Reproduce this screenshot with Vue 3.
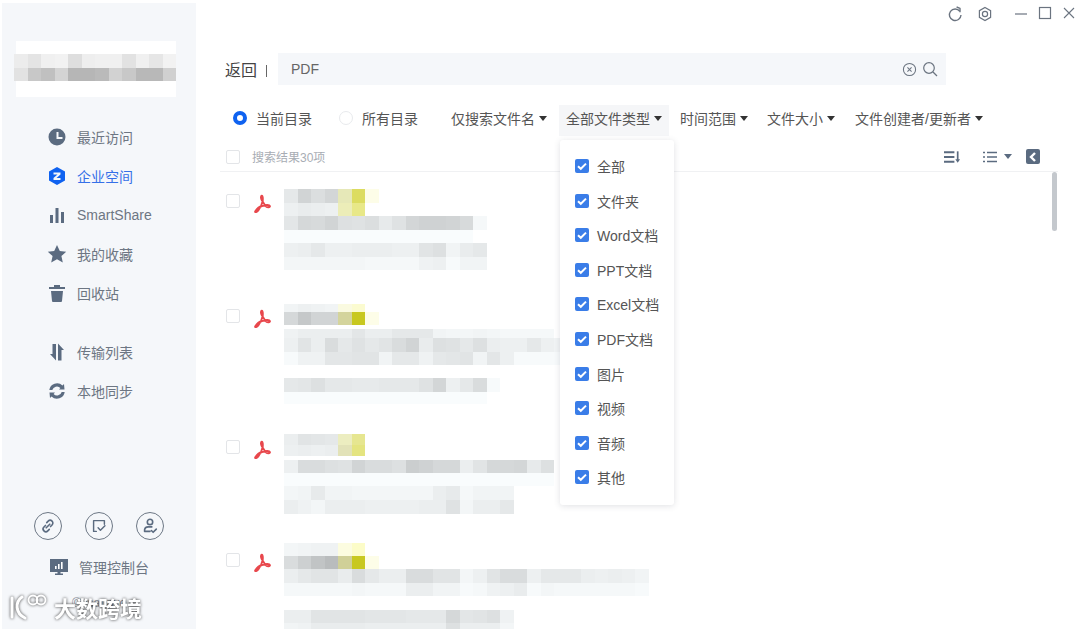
<script setup>
const navTop = [
  { label: '最近访问', d: 'M10 1.5a8.5 8.5 0 1 0 0 17 8.5 8.5 0 0 0 0-17z M9.5 5h2v5h4v2h-6z' },
  { label: '企业空间', active: true, d: 'M10 1L18 5.5V14.5L10 19L2 14.5V5.5z M6.5 6.5h7v2l-4 3.5h4v2h-7v-2l4-3.5h-4z' },
  { label: 'SmartShare', d: 'M3 10h3v8H3z M8.5 3h3v15h-3z M14 7h3v11h-3z' },
  { label: '我的收藏', d: 'M10 1l2.8 6 6.4.7-4.8 4.4 1.4 6.4L10 15.2 4.2 18.5l1.4-6.4L.8 7.7 7.2 7z' },
  { label: '回收站', d: 'M7 2h6v2h5v2H2V4h5z M4 8h12l-1 10a1 1 0 0 1-1 1H6a1 1 0 0 1-1-1z' },
]
const navBottom = [
  { label: '传输列表', d: 'M5.5 2H9v16.5L3 12h2.5z M11 1.5L17 8h-2.5v10.5H11z' },
  { label: '本地同步', d: 'M2.3 9A7.8 7.8 0 0 1 15.5 4.5L17 3L17.5 8.5L12 8.5L13.4 7A4.8 4.8 0 0 0 5.3 9z M17.7 11A7.8 7.8 0 0 1 4.5 15.5L3 17L2.5 11.5L8 11.5L6.6 13A4.8 4.8 0 0 0 14.7 11z' },
]

const fileTypes = ['全部', '文件夹', 'Word文档', 'PPT文档', 'Excel文档', 'PDF文档', '图片', '视频', '音频', '其他']

// two hex digits = grey level with a cool tint, six = a full colour
const cellColor = t => {
  if (t.length === 6) return `#${t}`
  const v = parseInt(t, 16)
  return `rgb(${v - 3}, ${v}, ${Math.min(v + 1, 255)})`
}
const row = (h, cells = '') => ({ h, cells: cells.split(' ').filter(Boolean).map(cellColor) })

const logoRows = [
  row(13.5, 'ececec e4e4e4 f0f0f0 f2f2f2 dedede eeeeee f0f0f0 f0f0f0 e2e2e2 f0f0f0 e6e6e6 f2f2f2'),
  row(13.5, 'e2e2e2 c8c8c8 c0c0c0 d4d4d4 b6b6b6 b6b6b6 bababa d2d2d2 c8c8c8 b8b8b8 b8b8b8 d0d0d0'),
]

const results = [
  {
    gap: 17, pad: 5,
    rows: [
      row(13.5, 'e8 d4 de d6 e6e8b8 dcdc60 fdfde8'),
      row(13.5, 'f0 ec ee f0 ecedb8 e8e888'),
      row(13.5, 'e6 d8 da d4 e0 e2 de ea e2 d6 d2 d2 d4 da f8'),
      row(13.5, 'fc fc fc fc fc fc fc fc fc fc fc fc fc fc'),
      row(13.5, 'f0 ee e8 f0 f0 ee ee ee f0 f0 e4 e0 f4 ec e8'),
      row(13.5, 'f6 f6 f6 f6 f6 f6 f8 f8 f8 f8 f2 f0 fa f4 f4'),
    ],
  },
  {
    gap: 34, pad: 5,
    rows: [
      row(7.5, 'f4 f0 f2 f4 fafae0 fbfbd0'),
      row(13.5, 'd8 c8 d4 d4 d4d49c c8c820 fdfde8'),
      row(4),
      row(9, 'f2 ee ee ee ee e6 ee ee e8 e8 e8 f4 f6 f6 f4 f6 f8 f8 f8 f8'),
      row(13.5, 'f0 e4 ee dc e8 e2 e8 e4 dc d4 ec e0 e2 e8 e0 ee f0 f0 e8 f0 f4'),
      row(13.5, 'fa f2 f2 e6 e6 e4 e4 f4 e8 e8 f2 e8 e6 e4 f4 e6 f0 fa fa fa fa'),
      row(13),
      row(13.5, 'e8 e6 e0 e8 e8 ea ea e8 e8 e8 e2 d6 f0 e8 dc fa'),
      row(12, 'fc fc fc fc fc fc fc fc fc fc fc fc fc fc fc'),
    ],
  },
  {
    gap: 30, pad: 6,
    rows: [
      row(11, 'ee e4 e6 e8 ecedc0 e6e690'),
      row(11, 'f0 ee f0 ee e2e2b8 e4e480'),
      row(4),
      row(13.5, 'f0 dc dc e0 e2 d4 dc dc e0 ce d2 d8 d8 ee e4 d8 d8 d6 ea e0'),
      row(13, 'fc fc fc fc fc fc fc fc fc fc fc fc fc fc fc fc fc fc fc fc'),
      row(13.5, 'f6 f4 ea f4 f4 f6 f6 f6 f6 f6 f6 ee ea f8 f4 f4 f4'),
      row(14, 'ee f2 f6 ee ee ee f0 f0 f0 f0 ee ee e2 f6 ee ee e8'),
    ],
  },
  {
    gap: 29, pad: 10,
    rows: [
      row(13, 'f6 f4 f2 f2 fcfce0 fcfcc8'),
      row(13.5, 'dc d0 c4 bc d0d098 c8c820 fdfde8'),
      row(13.5, 'ee e8 e4 e4 ec dc e8 ee ee dc dc e4 e4 f6 f0 e4 dc dc f0 e8 e8 e8 ee f0 ee f0 f4'),
      row(13.5, 'f8 f8 f8 f8 f8 f6 f8 f8 f8 ee ee f4 f4 fa f8 f2 f0 ec fa f6 f8 f8 f8 f8 f8 f8 fa'),
      row(13.5),
      row(13.5, 'ee ee e4 e4 e4 e4 e6 e6 e6 e8 e8 e8 d8 e6 e4 e0 f2'),
      row(13.5, 'f4 f2 ec ec ec ec ee ee ee ee ee ee e0 ee ee ee f6'),
    ],
  },
]
</script>

<template>
  <div class="app">
    <aside class="sidebar">
      <div class="logo">
        <div v-for="(r, i) in logoRows" :key="i" class="cells" :style="{ height: r.h + 'px' }">
          <i v-for="(c, j) in r.cells" :key="j" :style="{ background: c }"></i>
        </div>
      </div>

      <nav class="nav">
        <a v-for="item in navTop" :key="item.label" class="nav-item" :class="{ active: item.active }">
          <svg viewBox="0 0 20 20" width="20" height="20"><path :d="item.d" fill="currentColor" fill-rule="evenodd" /></svg>
          <span>{{ item.label }}</span>
        </a>
      </nav>
      <nav class="nav">
        <a v-for="item in navBottom" :key="item.label" class="nav-item">
          <svg viewBox="0 0 20 20" width="20" height="20"><path :d="item.d" fill="currentColor" fill-rule="evenodd" /></svg>
          <span>{{ item.label }}</span>
        </a>
      </nav>

      <div class="side-bottom">
        <div class="round-btns">
          <span class="round">
            <svg viewBox="0 0 20 20" width="18" height="18" fill="none" stroke="#5b6b80" stroke-width="1.8" stroke-linecap="round">
              <path d="M8.6 6.2l1.6-1.6a3 3 0 0 1 4.3 4.3l-1.7 1.7" />
              <path d="M11.4 13.8l-1.6 1.6a3 3 0 0 1-4.3-4.3l1.7-1.7" />
              <path d="M8 12l4-4" />
            </svg>
          </span>
          <span class="round">
            <svg viewBox="0 0 20 20" width="18" height="18" fill="none" stroke="#5b6b80" stroke-width="1.6" stroke-linecap="round" stroke-linejoin="round">
              <path d="M7 16H4V4h12v4" />
              <path d="M9 12l2.6 2.6 5-5" />
            </svg>
          </span>
          <span class="round">
            <svg viewBox="0 0 20 20" width="18" height="18" fill="none" stroke="#5b6b80" stroke-width="1.8" stroke-linecap="round" stroke-linejoin="round">
              <circle cx="10" cy="5.5" r="3" />
              <path d="M10 16H4v-2a4 4 0 0 1 4-3h4" />
              <path d="M11.5 15l2 2 3.5-3.5" />
            </svg>
          </span>
        </div>
        <div class="manage">
          <svg viewBox="0 0 18 18" width="18" height="18">
            <path d="M0 1h18v13h-7.5v1.5H13V17H5v-1.5h2.5V14H0z" fill="#5b6b80" />
            <path d="M5 8h1.6v3H5z M8 6h1.6v5H8z M11 4h1.6v7H11z" fill="#fff" />
          </svg>
          <span>管理控制台</span>
        </div>
        <div class="copyright">©esanpvo</div>
      </div>
    </aside>

    <main class="main">
      <header class="titlebar">
        <svg viewBox="0 0 16 16" width="16" height="16" fill="none" stroke="#6b7480" stroke-width="1.4" class="t-refresh">
          <path d="M12.8 5.2A5.8 5.8 0 1 0 14 9" />
          <path d="M9.6 1l3.4 1.4v3.8" stroke-linejoin="round" />
        </svg>
        <svg viewBox="0 0 16 16" width="16" height="16" fill="none" stroke="#6b7480" stroke-width="1.2" class="t-gear">
          <path d="M8 1.5l5.6 3.2v6.6L8 14.5l-5.6-3.2V4.7z" />
          <circle cx="8" cy="8" r="2.6" />
        </svg>
        <svg viewBox="0 0 14 14" width="14" height="14" fill="none" stroke="#6b7480" stroke-width="1.2" class="t-min"><path d="M1 7h12" /></svg>
        <svg viewBox="0 0 14 14" width="14" height="14" fill="none" stroke="#6b7480" stroke-width="1.2" class="t-max"><rect x="1.5" y="1.5" width="11" height="11" /></svg>
        <svg viewBox="0 0 14 14" width="14" height="14" fill="none" stroke="#6b7480" stroke-width="1.1" class="t-close"><path d="M2 2l10 10M12 2L2 12" /></svg>
      </header>

      <div class="search-row">
        <span class="back">返回</span>
        <span class="sep"></span>
        <div class="search-input">
          <span class="query">PDF</span>
          <svg viewBox="0 0 16 16" width="15" height="15" fill="none" stroke="#6b7480" stroke-width="1.1">
            <circle cx="8" cy="8" r="6.5" />
            <path d="M5.8 5.8l4.4 4.4M10.2 5.8l-4.4 4.4" />
          </svg>
          <svg viewBox="0 0 16 16" width="16" height="16" fill="none" stroke="#6b7480" stroke-width="1.2">
            <circle cx="7" cy="7" r="5.3" />
            <path d="M11 11l4 4" />
          </svg>
        </div>
      </div>

      <div class="filters">
        <label class="radio on"><i></i>当前目录</label>
        <label class="radio second"><i></i>所有目录</label>
        <div class="filter">仅搜索文件名<b class="caret"></b></div>
        <div class="filter open">
          全部文件类型<b class="caret"></b>
          <div class="dropdown">
            <div v-for="t in fileTypes" :key="t" class="opt">
              <span class="tick">
                <svg viewBox="0 0 14 14" width="14" height="14" fill="none" stroke="#fff" stroke-width="2"><path d="M3 7.2l2.8 2.6L11 4.6" /></svg>
              </span>
              {{ t }}
            </div>
          </div>
        </div>
        <div class="filter">时间范围<b class="caret"></b></div>
        <div class="filter">文件大小<b class="caret"></b></div>
        <div class="filter last">文件创建者/更新者<b class="caret"></b></div>
      </div>

      <div class="list-head">
        <span class="check"></span>
        <span class="count">搜索结果30项</span>
        <div class="head-tools">
          <svg viewBox="0 0 18 14" width="17" height="14" fill="none" stroke="#5b6b80" stroke-width="2.2">
            <path d="M0 2h11M0 7h11M0 12h11" />
            <path d="M14.5 1v10" stroke-width="1.8" />
            <path d="M12 9.5h5L14.5 13z" fill="#5b6b80" stroke="none" />
          </svg>
          <svg class="tool-list" viewBox="0 0 14 12" width="14" height="12" fill="none" stroke="#5b6b80" stroke-width="1.5">
            <path d="M0 1.5h2M4 1.5h10M0 6h2M4 6h10M0 10.5h2M4 10.5h10" />
          </svg>
          <b class="caret grey"></b>
          <span class="collapse">
            <svg viewBox="0 0 14 14" width="14" height="14" fill="none" stroke="#fff" stroke-width="2.4"><path d="M9 3L5 7l4 4" /></svg>
          </span>
        </div>
      </div>

      <div class="list">
        <div class="scrollbar"></div>
        <div v-for="(res, i) in results" :key="i" class="result" :style="{ marginTop: res.gap + 'px' }">
          <span class="check" :style="{ marginTop: res.pad + 'px' }"></span>
          <svg class="pdf" :style="{ marginTop: res.pad + 'px' }" viewBox="0 0 20 20" width="19" height="19" fill="none" stroke="#e8474c" stroke-width="2" stroke-linejoin="round">
            <path d="M9.2 1.8c-1 .2-1.3 2.2.2 5l4 6c2 1.6 4.8 1.4 4.4-.2-.4-1.4-4.4-1.2-8.4 0-3.4 1-6 4-7 5.6-.8 1.4 1.4 1.4 3.2-1 2-2.6 4-7 4.6-10 .3-2 .1-5.600-1-5.400z" />
          </svg>
          <div class="blurred">
            <div v-for="(r, j) in res.rows" :key="j" class="cells" :style="{ height: r.h + 'px' }">
              <i v-for="(c, k) in r.cells" :key="k" :style="{ background: c }"></i>
            </div>
          </div>
        </div>
      </div>
    </main>

    <div class="watermark">
      <svg viewBox="0 0 42 28" width="42" height="28" fill="none" stroke="#fff" stroke-width="3" stroke-linecap="round" stroke-linejoin="round">
        <path d="M3 5v19" />
        <path d="M13 4C6 9 6 20 16 25" />
        <circle cx="24" cy="7" r="4.5" stroke-width="1.8" />
        <circle cx="32" cy="7" r="4.5" stroke-width="1.8" />
      </svg>
      <span>大数跨境</span>
    </div>
  </div>
</template>

<style>
html, body { margin: 0; background: #fff; overflow: hidden; }
</style>

<style scoped>
.app {
  position: relative;
  width: 1080px;
  height: 629px;
  display: flex;
  overflow: hidden;
  background: #fff;
  font-family: "Liberation Sans", "Noto Sans CJK SC", sans-serif;
  font-size: 14px;
  color: #555;
}

.sidebar {
  flex: 0 0 194px;
  margin: 3px 0 0 2px;
  padding-top: 38px;
  box-sizing: border-box;
  display: flex;
  flex-direction: column;
  background: #f5f7fa;
}

.logo {
  width: 160px;
  height: 56px;
  margin-left: 14px;
  padding-top: 13px;
  box-sizing: border-box;
  background: #fff;
  filter: blur(0.5px);
}
.logo .cells { margin-left: -2px; }

.cells { display: flex; }
.cells i { flex: 0 0 13.5px; height: 100%; }

.nav { margin-top: 20px; }
.nav-item {
  height: 39px;
  padding-left: 45px;
  display: flex;
  align-items: center;
  gap: 10px;
  color: #6d7683;
}
.nav-item svg { color: #5b6b80; flex: none; }
.nav-item.active { color: #3570e8; }
.nav-item.active svg { color: #0f62f0; }

.side-bottom { margin-top: auto; padding-bottom: 19px; }
.round-btns { display: flex; gap: 23px; padding-left: 32px; }
.round {
  width: 28px;
  height: 28px;
  box-sizing: border-box;
  border: 1px solid #6d7785;
  border-radius: 50%;
  display: flex;
  align-items: center;
  justify-content: center;
}
.manage {
  margin-top: 17px;
  padding-left: 48px;
  display: flex;
  align-items: center;
  gap: 11px;
  height: 20px;
  color: #6d7683;
}
.copyright {
  margin-top: 19px;
  padding-left: 70px;
  font-size: 12px;
  line-height: 14px;
  color: #8b929b;
}

.main {
  flex: 1;
  min-width: 0;
  display: flex;
  flex-direction: column;
}

.titlebar {
  height: 53px;
  flex: none;
  box-sizing: border-box;
  padding: 6px 0 0 751px;
  display: flex;
  align-items: flex-start;
}
.t-gear { margin-left: 14px; }
.t-min { margin-left: 21px; margin-top: 1px; }
.t-max { margin-left: 10px; }
.t-close { margin-left: 10px; }

.search-row {
  height: 32px;
  flex: none;
  margin-left: 29px;
  display: flex;
  align-items: center;
}
.back { font-size: 16px; color: #444; }
.sep { width: 1px; height: 12px; margin: 3px 11px 0 9px; background: #666; }
.search-input {
  width: 668px;
  height: 32px;
  box-sizing: border-box;
  padding: 0 8px 0 13px;
  display: flex;
  align-items: center;
  gap: 5px;
  background: #f5f7fa;
}
.query { flex: 1; color: #666; margin-top: -1px; }

.filters {
  height: 31px;
  flex: none;
  margin-top: 20px;
  padding-left: 37px;
  display: flex;
  align-items: center;
  gap: 5px;
}
.radio {
  display: flex;
  align-items: center;
  gap: 9px;
  margin-right: 22px;
  padding-bottom: 6px;
}
.radio.second { margin-right: 21px; }
.radio i {
  width: 14px;
  height: 14px;
  box-sizing: border-box;
  border-radius: 50%;
  border: 1px solid #e8eaed;
  background: #fff;
}
.radio.on i { border: 4px solid #0f62f0; }
.filter {
  position: relative;
  height: 31px;
  box-sizing: border-box;
  padding: 0 7px 6px;
  display: flex;
  align-items: center;
  white-space: nowrap;
}
.filter.open { background: #f5f6f8; margin-right: -1px; }
.filter.last { margin-left: 1px; }
.caret {
  width: 0;
  height: 0;
  margin-left: 4px;
  margin-top: 2px;
  border-left: 4px solid transparent;
  border-right: 4px solid transparent;
  border-top: 5px solid #333;
}
.caret.grey { border-top-color: #5b6b80; margin-left: 7px; margin-top: 0; }

.dropdown {
  position: absolute;
  z-index: 10;
  top: 35px;
  left: 1px;
  width: 114px;
  height: 365px;
  box-sizing: border-box;
  padding-top: 9px;
  background: #fff;
  border-radius: 3px;
  box-shadow: 0 1px 6px rgba(60, 70, 90, 0.16);
}
.opt {
  height: 34.55px;
  padding-left: 15px;
  display: flex;
  align-items: center;
  gap: 8px;
  color: #555;
}
.tick {
  width: 14px;
  height: 14px;
  border-radius: 2px;
  background: #3a7de8;
  display: flex;
}

.check {
  flex: none;
  width: 14px;
  height: 14px;
  box-sizing: border-box;
  border: 1px solid #e3e5e8;
  border-radius: 2px;
  background: #fff;
}

.list-head {
  height: 36px;
  flex: none;
  box-sizing: border-box;
  margin-left: 24px;
  width: 838px;
  padding: 6px 18px 0 6px;
  display: flex;
  align-items: center;
  border-bottom: 1px solid #f0f1f3;
}
.count { margin-left: 12px; font-size: 12px; color: #a8adb4; }
.head-tools { margin-left: auto; display: flex; align-items: center; }
.tool-list { margin-left: 22px; }
.collapse {
  margin-left: 14px;
  width: 14px;
  height: 15px;
  border-radius: 2px;
  background: #5b6b80;
  display: flex;
  align-items: center;
  justify-content: center;
}

.list {
  flex: 1;
  min-height: 0;
  position: relative;
  overflow: hidden;
  padding-left: 30px;
}
.scrollbar {
  position: absolute;
  top: 0;
  left: 856px;
  width: 5px;
  height: 59px;
  border-radius: 3px;
  background: #c4c8cd;
}
.result { display: flex; align-items: flex-start; }
.pdf { flex: none; margin-left: 13px; margin-right: 12px; }
.blurred { filter: blur(0.6px); }

.watermark {
  position: absolute;
  left: 9px;
  bottom: 6px;
  display: flex;
  align-items: center;
  gap: 3px;
  color: #fff;
  font-size: 22px;
  font-weight: 700;
  filter: drop-shadow(0 0 1.5px rgba(0, 0, 0, 0.75));
}
</style>
